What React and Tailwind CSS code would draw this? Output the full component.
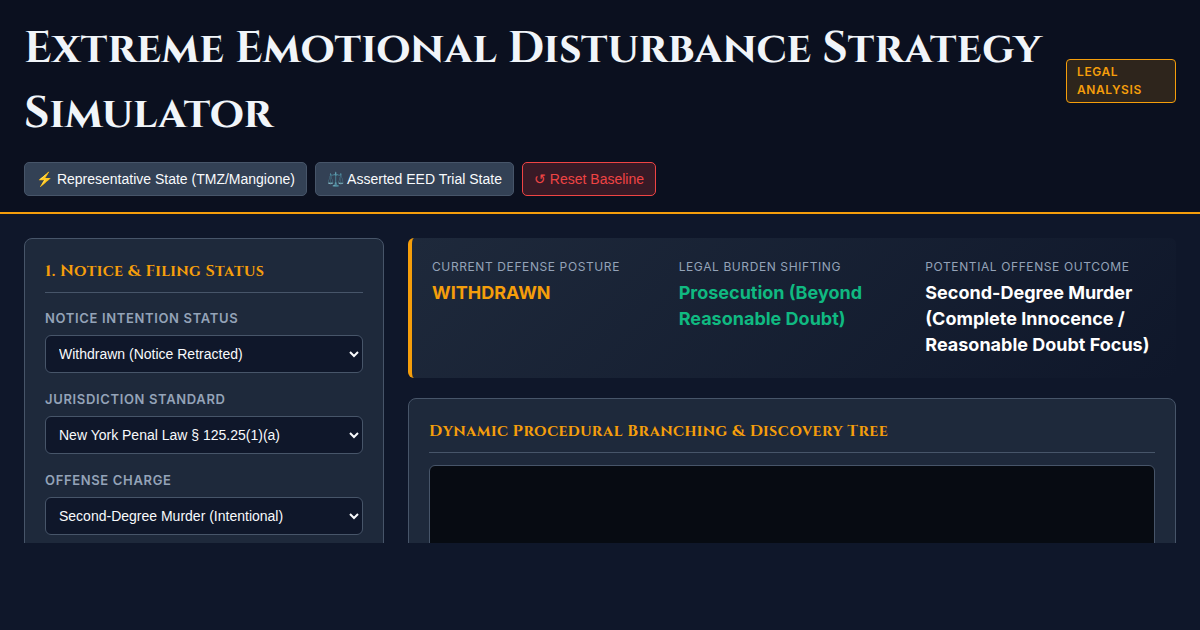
import React from "react";

function ActionButton({ children, danger }) {
  const tone = danger
    ? "border-[#ef4444] bg-[#ef4444]/20 text-[#ef4444]"
    : "border-[#475569] bg-[#334155] text-[#f8fafc]";
  return (
    <button type="button" className={`h-[34px] rounded-[5px] border px-[11px] text-sm leading-4 ${tone}`}>
      {children}
    </button>
  );
}

function CardTitle({ children }) {
  return (
    <h2 className="mb-3 border-b border-[#475569] pb-2 font-['Cinzel','Liberation_Serif',serif] text-base leading-[25px] font-bold tracking-wide text-[#f59e0b]">
      {children}
    </h2>
  );
}

function Field({ id, label, options }) {
  return (
    <div className="mb-[13px]">
      <label htmlFor={id} className="mb-1 block text-[13px] leading-[26px] font-semibold tracking-wider text-[#94a3b8] uppercase">
        {label}
      </label>
      <select
        id={id}
        className="block h-[38px] w-full rounded-md border border-[#475569] bg-[#0f172a] px-[9px] font-['Liberation_Sans',Arial,sans-serif] text-sm text-[#f8fafc]"
      >
        {options.map((o) => (
          <option key={o}>{o}</option>
        ))}
      </select>
    </div>
  );
}

function Stat({ label, value, tone }) {
  return (
    <div>
      <div className="mb-1 text-xs leading-[18px] tracking-wider text-[#94a3b8] uppercase">{label}</div>
      <div className={`text-lg leading-[26px] font-bold ${tone}`}>{value}</div>
    </div>
  );
}

export default function App() {
  return (
    <div className="min-h-screen bg-[#0f172a] font-['Inter',sans-serif] text-[#f8fafc]">
      <div className="flex h-[calc(100vh-87px)] flex-col overflow-hidden">
        <header className="flex shrink-0 flex-col gap-4 border-b-2 border-[#f59e0b] bg-[#0b101f] px-6 py-4">
          <div className="flex items-center justify-between gap-4">
            <h1 className="font-['Cinzel','Liberation_Serif',serif] text-[44px] leading-[65px] font-bold text-[#f1f5f9]">
              Extreme Emotional Disturbance Strategy Simulator
            </h1>
            <span className="w-[110px] shrink-0 rounded border border-[#f59e0b] bg-[#f59e0b]/15 px-2.5 py-[3px] text-xs leading-[18px] font-semibold tracking-wider text-[#f59e0b] uppercase">
              Legal Analysis
            </span>
          </div>
          <div className="flex flex-wrap gap-2 font-['Liberation_Sans',Arial,sans-serif]">
            <ActionButton>⚡ Representative State (TMZ/Mangione)</ActionButton>
            <ActionButton>⚖️ Asserted EED Trial State</ActionButton>
            <ActionButton danger>↺ Reset Baseline</ActionButton>
          </div>
        </header>

        <main className="grid min-h-0 flex-1 grid-cols-[360px_minmax(0,1fr)] items-start gap-6 overflow-hidden px-6 pt-6">
          <aside className="rounded-lg border border-[#475569] bg-[#1e293b] p-5">
            <CardTitle>1. Notice & Filing Status</CardTitle>
            <Field id="notice" label="Notice Intention Status" options={["Withdrawn (Notice Retracted)"]} />
            <Field id="jurisdiction" label="Jurisdiction Standard" options={["New York Penal Law § 125.25(1)(a)"]} />
            <Field id="charge" label="Offense Charge" options={["Second-Degree Murder (Intentional)"]} />
          </aside>

          <div className="flex flex-col gap-5">
            <section className="grid grid-cols-3 gap-4 rounded-md border-l-4 border-[#f59e0b] bg-[linear-gradient(135deg,#1e293b_0%,#0f172a_100%)] p-5">
              <Stat label="Current Defense Posture" value="WITHDRAWN" tone="text-[#f59e0b]" />
              <Stat label="Legal Burden Shifting" value="Prosecution (Beyond Reasonable Doubt)" tone="text-[#10b981]" />
              <Stat
                label="Potential Offense Outcome"
                value="Second-Degree Murder (Complete Innocence / Reasonable Doubt Focus)"
                tone="text-white"
              />
            </section>
            <section className="rounded-lg border border-[#475569] bg-[#1e293b] p-5">
              <CardTitle>Dynamic Procedural Branching & Discovery Tree</CardTitle>
              <div className="h-80 rounded-md border border-[#475569] bg-[#070b12]" />
            </section>
          </div>
        </main>
      </div>
    </div>
  );
}
